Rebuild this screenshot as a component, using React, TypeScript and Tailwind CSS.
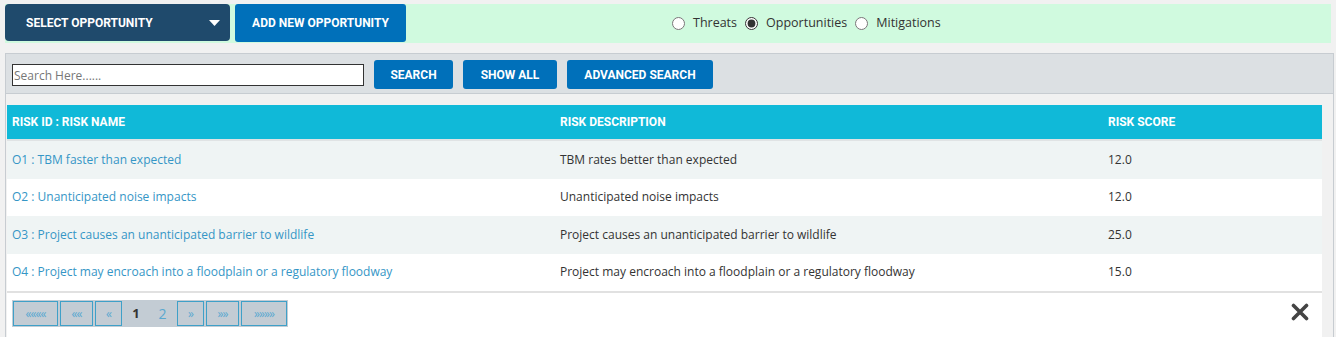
import React from "react";

const rows = [
  { id: "O1", name: "TBM faster than expected", desc: "TBM rates better than expected", score: "12.0" },
  { id: "O2", name: "Unanticipated noise impacts", desc: "Unanticipated noise impacts", score: "12.0" },
  { id: "O3", name: "Project causes an unanticipated barrier to wildlife", desc: "Project causes an unanticipated barrier to wildlife", score: "25.0" },
  { id: "O4", name: "Project may encroach into a floodplain or a regulatory floodway", desc: "Project may encroach into a floodplain or a regulatory floodway", score: "15.0" },
];

const btnFont = "font-['Roboto','Liberation_Sans',sans-serif] font-bold text-[12px] text-white";
const pageBtn = "h-[25px] border border-[#3fa0c8] flex items-center justify-center text-[12px] tracking-[-1px] text-[#5aa8d0]";

function Radio({ label, checked }: { label: string; checked?: boolean }) {
  return (
    <label className="flex items-center">
      <input type="radio" name="kind" defaultChecked={checked} className="w-[13px] h-[13px] m-0 mr-[8px] accent-[#333]" />
      <span className="mr-[8px]">{label}</span>
    </label>
  );
}

export default function App() {
  return (
    <div className="w-full h-[337px] overflow-hidden bg-[#f1f1f1] pt-[4px] font-['Open_Sans',sans-serif]">
      {/* top bar */}
      <div className="mx-[5px] h-[39px] bg-[#d0fadf] flex items-start">
        <div className="w-[225px] h-[37px] bg-[#1f4a6c] rounded-[4px] flex items-center pl-[21px] pr-[10px]">
          <span className={btnFont}>SELECT OPPORTUNITY</span>
          <svg className="ml-auto" width="11" height="6" viewBox="0 0 11 6">
            <polygon points="0,0 11,0 5.5,6" fill="#fff" />
          </svg>
        </div>
        <div className="ml-[5px] w-[171px] h-[38px] bg-[#0070ba] rounded-[3px] flex items-center justify-center">
          <span className={btnFont}>ADD NEW OPPORTUNITY</span>
        </div>
        <div className="ml-[266px] h-[39px] flex items-center text-[12.5px] text-[#333]">
          <Radio label="Threats" />
          <Radio label="Opportunities" checked />
          <Radio label="Mitigations" />
        </div>
      </div>

      {/* panel */}
      <div className="mt-[10px] ml-[5px] w-[1329px] border border-[#c7ccd1]">
        <div className="h-[40px] bg-[#dce0e3] border-b border-[#c7ccd1] flex items-start pl-[6px]">
          <input
            placeholder="Search Here......"
            className="mt-[10px] w-[352px] h-[22px] bg-white border border-[#333] px-[1px] text-[12px] placeholder:text-[#777] outline-none"
          />
          <div className="mt-[6px] ml-[10px] w-[79px] h-[29px] bg-[#0070ba] rounded-[3px] flex items-center justify-center">
            <span className={btnFont}>SEARCH</span>
          </div>
          <div className="mt-[6px] ml-[10px] w-[94px] h-[29px] bg-[#0070ba] rounded-[3px] flex items-center justify-center">
            <span className={btnFont}>SHOW ALL</span>
          </div>
          <div className="mt-[6px] ml-[10px] w-[146px] h-[29px] bg-[#0070ba] rounded-[3px] flex items-center justify-center">
            <span className={btnFont}>ADVANCED SEARCH</span>
          </div>
        </div>

        <div className="pt-[11px] pl-[1px] pr-[11px]">
          <div className="h-[36px] bg-[#10b9d8] grid grid-cols-[548px_548px_1fr] items-center border-b-2 border-[#e0e3e4]">
            <span className={`${btnFont} pl-[5px]`}>RISK ID : RISK NAME</span>
            <span className={`${btnFont} pl-[5px]`}>RISK DESCRIPTION</span>
            <span className={`${btnFont} pl-[5px]`}>RISK SCORE</span>
          </div>
          {rows.map((r, i) => (
            <div
              key={r.id}
              className={`h-[37.5px] grid grid-cols-[548px_548px_1fr] items-center text-[12px] ${i % 2 === 0 ? "bg-[#eff4f4]" : "bg-white"}`}
            >
              <span className="pl-[5px] text-[#3596c6]">
                {r.id} : {r.name}
              </span>
              <span className="pl-[5px] text-[#333]">{r.desc}</span>
              <span className="pl-[5px] text-[#333]">{r.score}</span>
            </div>
          ))}
          <div className="bg-white border-t-2 border-[#e1e1e1] h-[50px] flex items-start pt-[7px] pl-[5px] pr-[13px]">
            <div className="flex items-center bg-[#c3ccd4] p-[1px] gap-[2px] font-['Open_Sans',sans-serif]">
              <span className={`${pageBtn} w-[45px]`}>««««</span>
              <span className={`${pageBtn} w-[33px]`}>««</span>
              <span className={`${pageBtn} w-[27px]`}>«</span>
              <span className="w-[24px] h-[25px] flex items-center justify-center text-[13px] font-bold text-[#333]">1</span>
              <span className="w-[25px] h-[25px] flex items-center justify-center text-[14px] text-[#5aa8d0]">2</span>
              <span className={`${pageBtn} w-[27px]`}>»</span>
              <span className={`${pageBtn} w-[33px]`}>»»</span>
              <span className={`${pageBtn} w-[46px]`}>»»»»</span>
            </div>
            <svg className="ml-auto mt-[3px]" width="18" height="18" viewBox="0 0 18 18">
              <path d="M2.5 2.5 L15.5 15.5 M15.5 2.5 L2.5 15.5" stroke="#444" strokeWidth="3.6" strokeLinecap="round" />
            </svg>
          </div>
        </div>
      </div>
    </div>
  );
}
